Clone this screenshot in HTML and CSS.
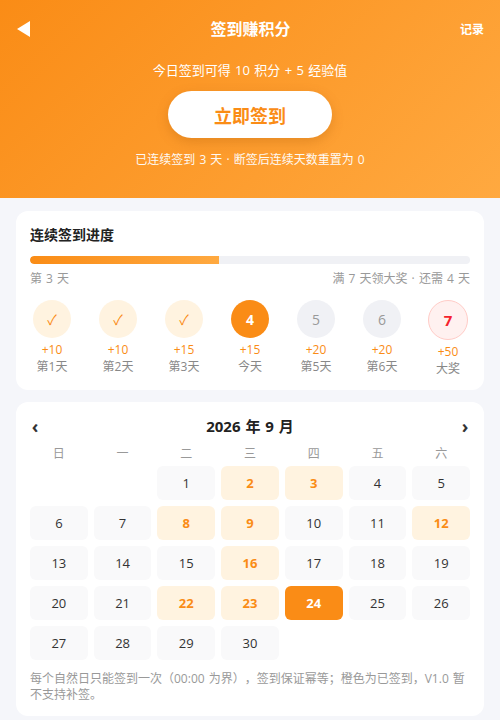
FILE: index.html
```html
<!DOCTYPE html>
<html lang="zh-CN">
<head>
<meta charset="utf-8">
<title>签到赚积分</title>
<link rel="stylesheet" href="styles.css">
</head>
<body>
<header class="hero">
  <div class="topbar">
    <span class="back"><svg width="14" height="16" viewBox="0 0 14 16"><polygon points="13,0 13,16 0,8" fill="#fff"/></svg></span>
    <span class="title">签到赚积分</span>
    <span class="record">记录</span>
  </div>
  <div class="sub">今日签到可得 10 积分 + 5 经验值</div>
  <button class="signbtn">立即签到</button>
  <div class="streak">已连续签到 3 天 · 断签后连续天数重置为 0</div>
</header>

<section class="card progress-card">
  <div class="card-title">连续签到进度</div>
  <div class="track"><div class="fill" style="width:43%"></div></div>
  <div class="prog-labels"><span>第 3 天</span><span>满 7 天领大奖 · 还需 4 天</span></div>
  <div class="days">
    <div class="day"><div class="circle done">✓</div><div class="reward">+10</div><div class="dlabel">第1天</div></div>
    <div class="day"><div class="circle done">✓</div><div class="reward">+10</div><div class="dlabel">第2天</div></div>
    <div class="day"><div class="circle done">✓</div><div class="reward">+15</div><div class="dlabel">第3天</div></div>
    <div class="day"><div class="circle today">4</div><div class="reward">+15</div><div class="dlabel">今天</div></div>
    <div class="day"><div class="circle future">5</div><div class="reward">+20</div><div class="dlabel">第5天</div></div>
    <div class="day"><div class="circle future">6</div><div class="reward">+20</div><div class="dlabel">第6天</div></div>
    <div class="day"><div class="circle prize">7</div><div class="reward">+50</div><div class="dlabel">大奖</div></div>
  </div>
</section>

<section class="card cal-card">
  <div class="cal-head"><span class="arrow">‹</span><span class="month">2026 年 9 月</span><span class="arrow">›</span></div>
  <div class="grid weekdays">
    <span>日</span><span>一</span><span>二</span><span>三</span><span>四</span><span>五</span><span>六</span>
  </div>
  <div class="grid cells">
    <span class="blank"></span><span class="blank"></span>
    <span class="c">1</span><span class="c s">2</span><span class="c s">3</span><span class="c">4</span><span class="c">5</span>
    <span class="c">6</span><span class="c">7</span><span class="c s">8</span><span class="c s">9</span><span class="c">10</span><span class="c">11</span><span class="c s">12</span>
    <span class="c">13</span><span class="c">14</span><span class="c">15</span><span class="c s">16</span><span class="c">17</span><span class="c">18</span><span class="c">19</span>
    <span class="c">20</span><span class="c">21</span><span class="c s">22</span><span class="c s">23</span><span class="c t">24</span><span class="c">25</span><span class="c">26</span>
    <span class="c">27</span><span class="c">28</span><span class="c">29</span><span class="c">30</span>
  </div>
  <p class="note">每个自然日只能签到一次（00:00 为界），签到保证幂等；橙色为已签到，V1.0 暂不支持补签。</p>
</section>
</body>
</html>
```

FILE: styles.css
```css
* { box-sizing: border-box; }
body {
  margin: 0;
  background: #f5f6fa;
  font-family: "Open Sans", "Noto Sans CJK SC", sans-serif;
  color: #333;
  text-spacing-trim: space-all;
  word-spacing: 1px;
}
.hero {
  height: 198px;
  background: linear-gradient(135deg, #fa8c16 0%, #ffa940 100%);
  color: #fff;
  display: flex;
  flex-direction: column;
  align-items: center;
}
.topbar {
  width: 100%;
  height: 58px;
  padding: 0 16px 0 17px;
  display: flex;
  align-items: center;
  justify-content: space-between;
}
.back { width: 24px; display: flex; align-items: center; }
.back svg { display: block; }
.title { font-size: 16px; font-weight: 700; line-height: 20px; }
.record { width: 24px; font-size: 12px; font-weight: 700; text-align: right; }
.sub { margin-top: 2px; font-size: 13px; line-height: 20px; }
.signbtn {
  margin-top: 11px;
  width: 164px;
  height: 47px;
  border: none;
  border-radius: 24px;
  background: #fff;
  color: #fa8c16;
  font-family: inherit;
  font-size: 18px;
  font-weight: 700;
  box-shadow: 0 4px 12px rgba(160, 80, 0, 0.25);
}
.streak { margin-top: 13px; font-size: 12px; line-height: 18px; opacity: 0.95; }

.card {
  margin: 13px 16px 0;
  background: #fff;
  border-radius: 12px;
  padding: 14px;
}
.progress-card { padding-bottom: 12px; }
.card-title { font-size: 14px; font-weight: 700; line-height: 20px; color: #222; }
.track {
  margin-top: 11px;
  height: 8px;
  border-radius: 4px;
  background: #f0f1f5;
  overflow: hidden;
}
.fill { height: 100%; border-radius: 4px 0 0 4px; background: linear-gradient(90deg, #fa8c16, #ffa940); }
.prog-labels {
  margin-top: 6px;
  display: flex;
  justify-content: space-between;
  font-size: 12px;
  line-height: 18px;
  color: #999;
}
.days {
  margin-top: 12px;
  display: flex;
  justify-content: space-between;
  align-items: flex-start;
}
.day { width: 44px; display: flex; flex-direction: column; align-items: center; }
.circle {
  width: 38px;
  height: 38px;
  border-radius: 50%;
  display: flex;
  align-items: center;
  justify-content: center;
  font-size: 14px;
}
.circle.done { background: #fff3e0; color: #fa8c16; }
.circle.today { background: #fa8c16; color: #fff; font-weight: 700; }
.circle.future { background: #f0f1f5; color: #999; }
.circle.prize {
  width: 40px;
  height: 40px;
  background: #fff1f0;
  border: 1px solid #ffccc7;
  color: #f5222d;
  font-weight: 700;
  font-size: 15px;
}
.reward { margin-top: 4px; font-size: 12px; line-height: 16px; color: #fa8c16; }
.dlabel { font-size: 12px; line-height: 18px; color: #888; }

.cal-card { margin-top: 12px; }
.cal-head {
  display: flex;
  justify-content: space-between;
  align-items: center;
  line-height: 20px;
  padding: 0 1px;
}
.arrow { font-size: 18px; font-weight: 700; color: #333; width: 8px; text-align: center; }
.month { font-size: 15px; font-weight: 700; color: #222; }
.grid {
  display: grid;
  grid-template-columns: repeat(7, 1fr);
  column-gap: 6px;
}
.weekdays {
  margin-top: 10px;
  font-size: 12px;
  line-height: 16px;
  color: #999;
  text-align: center;
}
.cells { margin-top: 4px; row-gap: 6px; }
.c {
  height: 34px;
  border-radius: 6px;
  background: #f9f9fa;
  display: flex;
  align-items: center;
  justify-content: center;
  font-size: 13px;
  color: #333;
}
.c.s { background: #fff3e0; color: #fa8c16; font-weight: 700; }
.c.t { background: #fa8c16; color: #fff; font-weight: 700; }
.note {
  margin: 11px 0 0;
  font-size: 12px;
  line-height: 15.5px;
  color: #999;
}
```
